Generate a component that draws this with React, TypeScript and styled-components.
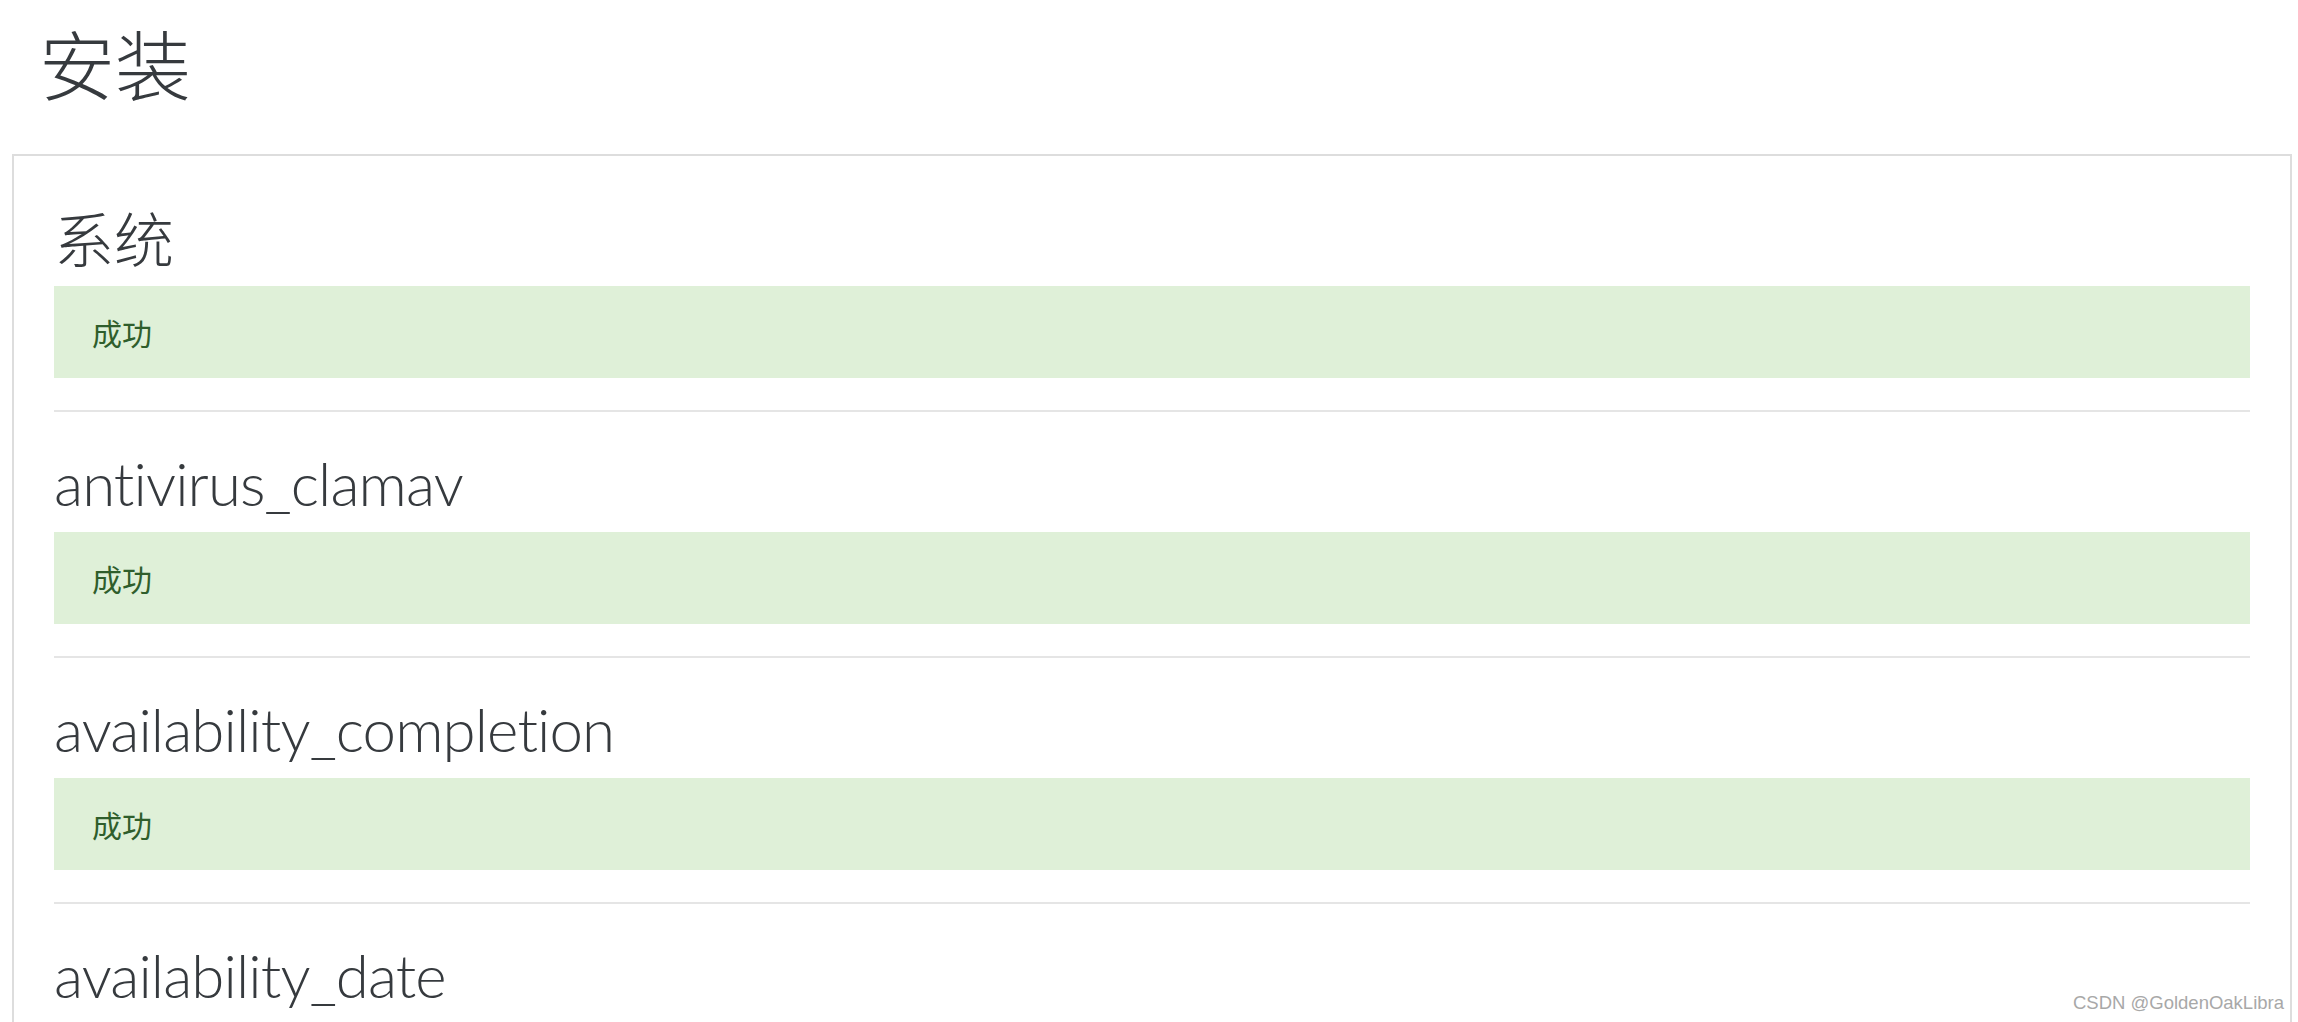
import React from "react";
import styled, { createGlobalStyle } from "styled-components";

const GlobalStyle = createGlobalStyle`
  html, body {
    margin: 0;
    padding: 0;
    height: 1022px;
    overflow: hidden;
    background: #ffffff;
  }
  body {
    font-family: "Lato", "Noto Sans CJK SC", sans-serif;
    color: #363a3e;
  }
`;

const Page = styled.div`
  position: relative;
  height: 1022px;
  padding: 0 6px 0 12px;
  box-sizing: border-box;
`;

const PageTitle = styled.h1`
  margin: 0;
  padding: 12px 0 0 27px;
  height: 154px;
  box-sizing: border-box;
  font-family: "Noto Sans CJK SC", sans-serif;
  font-weight: 300;
  font-size: 76px;
  line-height: 100px;
  color: #363a3e;
`;

const Panel = styled.div`
  border: 2px solid #dddddd;
  padding: 14px 40px 0 40px;
`;

const Section = styled.section`
  display: flex;
  flex-direction: column;
`;

const Heading = styled.h3<{ $cjk?: boolean }>`
  margin: ${(p) => (p.$cjk ? "34px 0 16px" : "38px 0 16px")};
  font-family: ${(p) =>
    p.$cjk ? `"Noto Sans CJK SC", sans-serif` : `"Lato", "Noto Sans CJK SC", sans-serif`};
  font-weight: 300;
  font-size: 60px;
  line-height: 66px;
  letter-spacing: ${(p) => (p.$cjk ? "0" : "-0.9px")};
  font-variant-ligatures: none;
  color: #363a3e;
`;

const Alert = styled.div`
  height: 92px;
  display: flex;
  align-items: center;
  padding: 0 38px;
  background: #dff0d8;
  color: #2f5e2c;
  font-family: "Noto Sans CJK SC", sans-serif;
  font-size: 30px;
`;

const Divider = styled.hr`
  margin: 32px 0 0;
  border: 0;
  border-top: 2px solid #e5e5e5;
  height: 0;
`;

const Watermark = styled.div`
  position: absolute;
  right: 14px;
  bottom: 8px;
  font-family: "Liberation Sans", Arial, sans-serif;
  font-size: 18.5px;
  color: #a8a8a8;
  text-shadow: 0 0 1px #ffffff;
`;

const sections = [
  { name: "系统", cjk: true },
  { name: "antivirus_clamav" },
  { name: "availability_completion" },
  { name: "availability_date" },
];

export default function App() {
  return (
    <Page>
      <GlobalStyle />
      <PageTitle>安装</PageTitle>
      <Panel>
        {sections.map((s) => (
          <Section key={s.name}>
            <Heading $cjk={s.cjk}>{s.name}</Heading>
            <Alert>成功</Alert>
            <Divider />
          </Section>
        ))}
      </Panel>
      <Watermark>CSDN @GoldenOakLibra</Watermark>
    </Page>
  );
}
